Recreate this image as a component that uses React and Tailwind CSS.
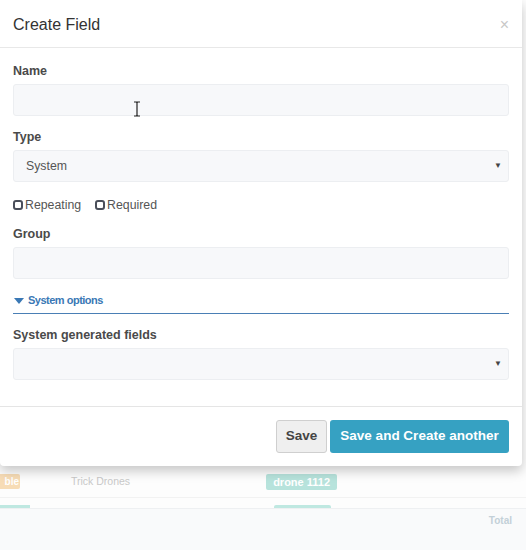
import React from "react";

const Label = ({ children }) => (
  <div className="text-[12.5px] leading-4 font-bold text-[#4a4a4a] mb-[5px]">{children}</div>
);

const Input = ({ children }) => (
  <div className="relative h-[32px] w-full bg-[#f7f8fa] border border-[#eceef1] rounded-[3px]">{children}</div>
);

const Select = ({ value }) => (
  <div className="h-[32px] w-full bg-[#f7f8fa] border border-[#eceef1] rounded-[3px] flex items-center justify-between pl-[12px] pr-[6px]">
    <span className="text-[12.3px] text-[#555]">{value}</span>
    <span className="text-[8px] text-[#444] leading-none">▼</span>
  </div>
);

const Check = ({ label }) => (
  <label className="flex items-center gap-[2px] text-[12.3px] text-[#555]">
    <span className="w-[10px] h-[10px] border-2 border-[#4a4f5a] rounded-[3px]" />
    {label}
  </label>
);

export default function App() {
  return (
    <div className="w-[526px] h-[550px] bg-[#fdfdfd] overflow-hidden font-['Liberation_Sans',Arial,sans-serif]">
      <div className="relative z-10 w-[522px] bg-white rounded-b-[4px] shadow-[0_5px_12px_rgba(0,0,0,0.22)]">
        {/* header */}
        <div className="h-[48px] px-[13px] pt-[2px] flex items-center justify-between border-b border-[#e8e8e8]">
          <h4 className="text-[16px] text-[#333]">Create Field</h4>
          <span className="text-[16px] text-[#c8c8c8] leading-none">×</span>
        </div>

        {/* body */}
        <div className="px-[13px] pt-[15px] pb-[26px]">
          <Label>Name</Label>
          <Input>
            <svg className="absolute left-[119px] top-[16px]" width="8" height="16" viewBox="0 0 8 16">
              <path d="M1 1h2.5L4 2l.5-1H7M4 2v12M1 15h2.5L4 14l.5 1H7" fill="none" stroke="#222" strokeWidth="1.2" />
            </svg>
          </Input>

          <div className="mt-[13px]">
            <Label>Type</Label>
            <Select value="System" />
          </div>

          <div className="mt-[15px] flex items-center gap-[14px] h-[16px]">
            <Check label="Repeating" />
            <Check label="Required" />
          </div>

          <div className="mt-[13px]">
            <Label>Group</Label>
            <Input />
          </div>

          <div className="mt-[15px] pb-[6px] border-b border-[#4a7fb5] flex items-center gap-[4px] h-[20px]">
            <span className="ml-[1px] w-0 h-0 border-l-[5px] border-r-[5px] border-t-[6px] border-l-transparent border-r-transparent border-t-[#3a78b5]" />
            <span className="text-[11px] text-[#3a78b5] font-bold tracking-[-0.5px]">System options</span>
          </div>

          <div className="mt-[13px]">
            <Label>System generated fields</Label>
            <Select value="" />
          </div>
        </div>

        {/* footer */}
        <div className="border-t border-[#e5e5e5] px-[13px] py-[13px] flex justify-end gap-[3px]">
          <button className="h-[33px] w-[51px] bg-[#efefef] border border-[#cfcfcf] rounded-[3px] text-[13.5px] font-bold text-[#444]">
            Save
          </button>
          <button className="h-[33px] w-[179px] bg-[#36a1c2] rounded-[3px] text-[13.5px] font-bold text-white">
            Save and Create another
          </button>
        </div>
      </div>

      {/* faded table behind the modal */}
      <div className="h-[32px] flex items-center border-b border-[#f2f2f2]">
        <span className="h-[15px] w-[20px] bg-[#f7dcb6] rounded-r-[2px] text-[10px] font-bold text-white leading-[15px] text-right pr-[1px]">ble</span>
        <span className="ml-[51px] text-[10.5px] text-[#c9c9c9]">Trick Drones</span>
        <span className="ml-[136px] h-[16px] px-[7px] bg-[#b7e3dc] rounded-[2px] text-[11px] font-bold text-white leading-[16px]">drone 1112</span>
      </div>
      <div className="h-[10px] flex items-end">
        <span className="h-[3px] w-[30px] bg-[#bfe8e1]" />
        <span className="ml-[244px] h-[3px] w-[57px] bg-[#bfe8e1] rounded-t-[2px]" />
      </div>
      <div className="h-[60px] bg-[#f9fafb] border-t border-[#eef0f2] flex justify-end pr-[14px] pt-[4px]">
        <span className="text-[10px] font-bold text-[#c3d0d8]">Total</span>
      </div>
    </div>
  );
}
